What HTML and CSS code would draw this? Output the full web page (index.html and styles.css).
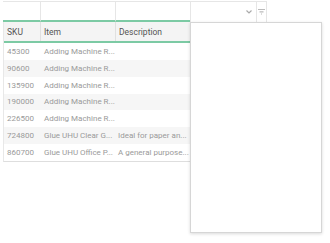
FILE: index.html
```html
<!DOCTYPE html>
<html>
<head>
<meta charset="utf-8">
<link rel="stylesheet" href="styles.css">
</head>
<body>
<div class="wrap">
  <div class="filters">
    <div class="fcell c1"></div>
    <div class="fcell c2"></div>
    <div class="fcell c3"></div>
    <div class="fcell c4 select">
      <svg class="chev" width="6" height="4" viewBox="0 0 6 4"><path d="M0.5 0.5 L3 3 L5.5 0.5" fill="none" stroke="#aaa" stroke-width="1.2"/></svg>
    </div>
    <div class="fcell c5">
      <svg width="7" height="6" viewBox="0 0 7 6"><path d="M0 0.5 H7 M1.5 2.8 H5.5 M3 5 H4" stroke="#bbb" stroke-width="1.2"/></svg>
    </div>
  </div>
  <div class="table">
    <div class="head">
      <div class="hc c1">SKU</div>
      <div class="hc c2">Item</div>
      <div class="hc c3">Description</div>
    </div>
    <div class="row"><div class="c1">45300</div><div class="c2">Adding Machine R...</div><div class="c3"></div></div>
    <div class="row alt"><div class="c1">90600</div><div class="c2">Adding Machine R...</div><div class="c3"></div></div>
    <div class="row"><div class="c1">135900</div><div class="c2">Adding Machine R...</div><div class="c3"></div></div>
    <div class="row alt"><div class="c1">190000</div><div class="c2">Adding Machine R...</div><div class="c3"></div></div>
    <div class="row"><div class="c1">226500</div><div class="c2">Adding Machine R...</div><div class="c3"></div></div>
    <div class="row alt"><div class="c1">724800</div><div class="c2">Glue UHU Clear G...</div><div class="c3">Ideal for paper an...</div></div>
    <div class="row"><div class="c1">860700</div><div class="c2">Glue UHU Office P...</div><div class="c3">A general purpose...</div></div>
  </div>
  <div class="dropdown"></div>
</div>
</body>
</html>
```
FILE: styles.css
```css
* { box-sizing: border-box; }
html, body { margin: 0; background: #fff; }
body { font-family: Roboto, "Noto Sans", sans-serif; font-size: 8px; color: #9a9a9a; }
.wrap { position: relative; padding: 1px 0 0 3px; min-height: 243px; }
.filters { display: flex; height: 21px; }
.fcell { border-top: 1px solid #e6e6e6; border-left: 1px solid #e6e6e6; height: 21px; }
.c1 { width: 37px; }
.c2 { width: 75px; }
.c3 { width: 75px; }
.filters .c4 { width: 67px; display: flex; align-items: center; justify-content: flex-end; padding-right: 4px; border-right: 1px solid #e6e6e6; }
.filters .c5 { width: 10px; border-left: none; border-right: 1px solid #e6e6e6; display: flex; align-items: center; justify-content: center; }
.filters .c1, .filters .c2, .filters .c3 { border-bottom: 2px solid #7ccaa4; }
.filters .c1 { border-left: none; }
.table { width: 187px; border-left: 1px solid #e8e8e8; border-bottom: 1px solid #dedede; }
.head { display: flex; height: 21px; background: #f4f4f4; border-bottom: 2px solid #7ccaa4; font-size: 8.5px; color: #555; }
.hc { display: flex; align-items: center; padding-left: 3px; border-left: 1px solid #e0e0e0; }
.head .c1 { border-left: none; width: 36px; padding-left: 3px; }
.row { display: flex; height: 16.85px; align-items: center; }
.row > div { padding-left: 3px; white-space: nowrap; overflow: hidden; }
.row .c1 { width: 36px; padding-left: 3px; }
.row .c2 { padding-left: 4px; }
.alt { background: #f6f6f6; }
.dropdown { position: absolute; left: 190px; top: 22px; width: 132px; height: 211px; background: #fff; border: 1px solid #d6d6d6; box-shadow: 0 1px 3px rgba(0,0,0,0.15); }
```
